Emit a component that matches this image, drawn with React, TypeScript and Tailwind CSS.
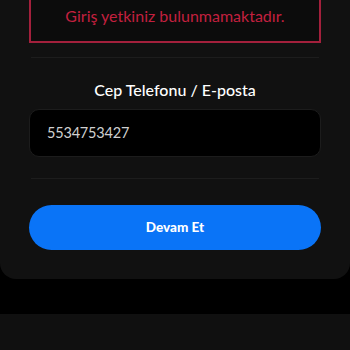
import React from "react";

export default function App() {
  return (
    <div className="w-[350px] h-[350px] bg-black overflow-hidden flex flex-col" style={{ fontFamily: "Lato, 'Noto Sans', sans-serif" }}>
      <div className="bg-[#111111] rounded-b-[16px] h-[279px] flex flex-col items-center px-[29px] shrink-0">
        <div className="w-full h-[45px] -mt-[2px] border-2 border-[#a3203c] bg-[#0c0c0c] flex items-center justify-center">
          <span className="text-[16px] text-[#c3203f] leading-none mt-[-9px]">Giriş yetkiniz bulunmamaktadır.</span>
        </div>
        <div className="w-[288px] h-px bg-[#1d1d1d] mt-[14px]"></div>
        <div className="mt-[23px] text-[16px] text-white font-medium leading-none h-[18px] flex items-center">Cep Telefonu / E-posta</div>
        <div className="w-full h-[48px] mt-[10px] bg-black border border-[#1c1c1c] rounded-[10px] flex items-center px-[17px]">
          <span className="text-[14.5px] text-[#d0d0d0] leading-none tracking-[-0.2px]">5534753427</span>
        </div>
        <div className="w-[288px] h-px bg-[#1d1d1d] mt-[21px]"></div>
        <button className="w-full h-[45px] mt-[26px] rounded-full bg-[#0a74f7] flex items-center justify-center">
          <span className="text-[13.5px] font-black text-white leading-none">Devam Et</span>
        </button>
      </div>
      <div className="h-[35px] shrink-0"></div>
      <div className="flex-1 bg-[#101010]"></div>
    </div>
  );
}
